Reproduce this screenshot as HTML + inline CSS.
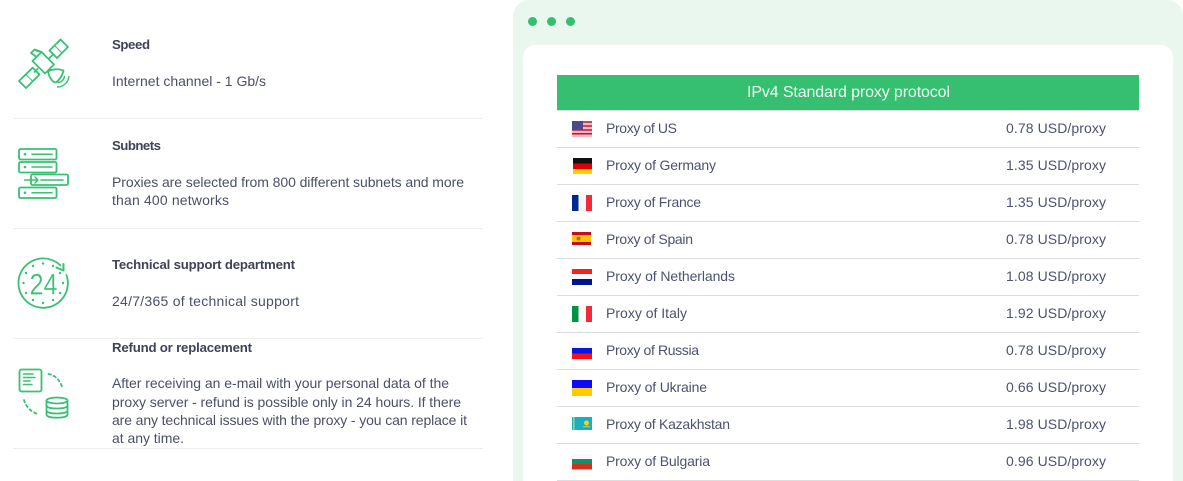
<!DOCTYPE html>
<html lang="en"><head><meta charset="utf-8"><title>Proxy</title>
<style>
html,body{margin:0;padding:0;background:#fff;width:1183px;height:481px;overflow:hidden}
body{position:relative}
.abs{position:absolute}
.panel{left:513px;top:0;width:670px;height:481px;background:#eaf7ef;border-radius:16px 16px 0 0}
.inner{left:523px;top:45px;width:650px;height:436px;background:#fff;border-radius:12px 12px 0 0}
.dot{top:16.5px;width:9px;height:9px;border-radius:50%;background:#34bf70}
.head{left:557px;top:75px;width:582px;height:35px;background:#36bf71}
.sep{background:#eeeeee;height:1px;left:13px;width:470px}
.rl{background:#dddddd;height:1px;left:557px;width:582px}
svg.o{position:absolute;left:0;top:0}
text{font-family:"Liberation Sans",sans-serif}
.t{font-size:13.2px;font-weight:bold;fill:#3f4258}
.b{font-size:14px;fill:#4b5068}
.r{font-size:14px;fill:#4c5270}
.h{font-size:16px;fill:#eafff3}
.ic{fill:none;stroke:#38c174;stroke-width:1.8;stroke-linejoin:round;stroke-linecap:round}
</style></head><body>
<div class="abs panel"></div>
<div class="abs inner"></div>
<div class="abs dot" style="left:528px"></div>
<div class="abs dot" style="left:547px"></div>
<div class="abs dot" style="left:566px"></div>
<div class="abs head"></div>
<div class="abs sep" style="top:118px"></div>
<div class="abs sep" style="top:228px"></div>
<div class="abs sep" style="top:338px"></div>
<div class="abs sep" style="top:448px"></div>
<div class="abs rl" style="top:110px"></div>
<div class="abs rl" style="top:147px"></div>
<div class="abs rl" style="top:184px"></div>
<div class="abs rl" style="top:221px"></div>
<div class="abs rl" style="top:258px"></div>
<div class="abs rl" style="top:295px"></div>
<div class="abs rl" style="top:332px"></div>
<div class="abs rl" style="top:369px"></div>
<div class="abs rl" style="top:406px"></div>
<div class="abs rl" style="top:443px"></div>
<div class="abs rl" style="top:480px"></div>

<svg class="o" width="1183" height="481" viewBox="0 0 1183 481" xmlns="http://www.w3.org/2000/svg">
<!-- satellite -->
<g class="ic">
<path d="M60.500 39.500L68 47L57 58L49.500 50.500Z"/>
<path d="M32.700 67.700L39.500 74.500L26 88L19 81Z"/>
<path d="M26 74.700L33 81.500M54.500 45.500L62 53" stroke-width="1"/>
<path d="M53 54.500L49.500 58M37.500 69L34.500 72"/>
<path d="M41.500 52L54 64.500L45 73.500L32.500 61Z"/>
<path d="M36 56.500L31 53L34.500 49.500L38 51.500M34.500 49.500L41.500 52"/>
<path d="M48 71.500C49.500 79 54 83.500 56.500 82C60 79.500 63 74 63.500 70.500C58.500 68.500 52 69 48 71.500Z"/>
<path d="M58 82.500C61 82.500 64 80 64.500 76.500M57.500 87C63 87 68.500 82.500 68.800 76.500" stroke-width="1.400"/>
</g>
<!-- subnets -->
<g class="ic">
<rect x="19" y="149" width="37.500" height="10.500" rx="1.500"/>
<rect x="19" y="162" width="37.500" height="10.500" rx="1.500"/>
<rect x="31" y="174.500" width="37" height="10.500" rx="1.500"/>
<rect x="19" y="187.500" width="37.500" height="10.500" rx="1.500"/>
<path d="M32 154.200H52M32 167H52M41 180H63M32 192.700H52M24.500 180H38M35 177L38 180L35 183" stroke-width="1.500"/>
</g>
<g fill="#38c174"><circle cx="25" cy="154.200" r="1.300"/><circle cx="25" cy="167" r="1.300"/><circle cx="25" cy="192.700" r="1.300"/></g>
<!-- 24 -->
<g class="ic">
<path d="M60.500 265.500A24.700 24.700 0 1 0 66.500 275"/>
<path d="M56.500 267.500L63.500 270.500L63.500 264" stroke-width="2"/>
</g>
<g fill="#38c174">
<circle cx="43" cy="263.500" r="1.200"/><circle cx="33" cy="266" r="1.200"/><circle cx="53" cy="266" r="1.200"/>
<circle cx="26" cy="273" r="1.200"/><circle cx="60" cy="273" r="1.200"/><circle cx="23.500" cy="283" r="1.200"/><circle cx="63" cy="283" r="1.200"/>
<circle cx="26" cy="293" r="1.200"/><circle cx="60" cy="293" r="1.200"/><circle cx="33" cy="300" r="1.200"/><circle cx="53" cy="300" r="1.200"/><circle cx="43" cy="303" r="1.200"/>
</g>
<text x="29.500" y="294.500" font-size="30" fill="#38c174" stroke="#ffffff" stroke-width="0.250" textLength="28" lengthAdjust="spacingAndGlyphs">24</text>
<!-- refund -->
<g class="ic">
<rect x="19.500" y="369.500" width="22" height="22" rx="2"/>
<path d="M23.500 374H33M23.500 377.500H35M23.500 381H30M23.500 384.500H32" stroke-width="1.500"/>
<path d="M48.500 374C55 375 60 380 62.500 388" stroke-dasharray="2.500 3"/>
<path d="M24 400C26 407 31 412 39 414.500" stroke-dasharray="2.500 3"/>
<ellipse cx="57" cy="400.500" rx="10.500" ry="3"/>
<path d="M46.500 400.500V414.500C46.500 416.500 51 417.700 57 417.700S67.500 416.500 67.500 414.500V400.500M46.500 405.500C46.500 407.500 51 408.500 57 408.500S67.500 407.500 67.500 405.500M46.500 410.500C46.500 412.500 51 413.500 57 413.500S67.500 412.500 67.500 410.500"/>
</g>

<!-- left text -->
<text class="t" x="112" y="49" textLength="38">Speed</text>
<text class="b" x="112" y="86" textLength="154">Internet channel - 1 Gb/s</text>
<text class="t" x="112" y="150" textLength="49">Subnets</text>
<text class="b" x="112" y="187" textLength="352">Proxies are selected from 800 different subnets and more</text>
<text class="b" x="112" y="205" textLength="117">than 400 networks</text>
<text class="t" x="112" y="269" textLength="183">Technical support department</text>
<text class="b" x="112" y="306" textLength="187">24/7/365 of technical support</text>
<text class="t" x="112" y="352" textLength="140">Refund or replacement</text>
<text class="b" x="112" y="388" textLength="337">After receiving an e-mail with your personal data of the</text>
<text class="b" x="112" y="407" textLength="349">proxy server - refund is possible only in 24 hours. If there</text>
<text class="b" x="112" y="425" textLength="355">are any technical issues with the proxy - you can replace it</text>
<text class="b" x="112" y="443" textLength="72">at any time.</text>

<!-- table text -->
<text class="h" x="747" y="97" textLength="203">IPv4 Standard proxy protocol</text>
<text class="r" x="606" y="133" textLength="71">Proxy of US</text>
<text class="r" x="606" y="170" textLength="110">Proxy of Germany</text>
<text class="r" x="606" y="207" textLength="95">Proxy of France</text>
<text class="r" x="606" y="244" textLength="87">Proxy of Spain</text>
<text class="r" x="606" y="281" textLength="129">Proxy of Netherlands</text>
<text class="r" x="606" y="318" textLength="81">Proxy of Italy</text>
<text class="r" x="606" y="355" textLength="93">Proxy of Russia</text>
<text class="r" x="606" y="392" textLength="101">Proxy of Ukraine</text>
<text class="r" x="606" y="429" textLength="124">Proxy of Kazakhstan</text>
<text class="r" x="606" y="466" textLength="104">Proxy of Bulgaria</text>
<text class="r" x="1006" y="133" textLength="100">0.78 USD/proxy</text>
<text class="r" x="1006" y="170" textLength="100">1.35 USD/proxy</text>
<text class="r" x="1006" y="207" textLength="100">1.35 USD/proxy</text>
<text class="r" x="1006" y="244" textLength="100">0.78 USD/proxy</text>
<text class="r" x="1006" y="281" textLength="100">1.08 USD/proxy</text>
<text class="r" x="1006" y="318" textLength="100">1.92 USD/proxy</text>
<text class="r" x="1006" y="355" textLength="100">0.78 USD/proxy</text>
<text class="r" x="1006" y="392" textLength="100">0.66 USD/proxy</text>
<text class="r" x="1006" y="429" textLength="100">1.98 USD/proxy</text>
<text class="r" x="1006" y="466" textLength="100">0.96 USD/proxy</text>

<!-- flags -->
<!-- US -->
<g>
<rect x="572" y="121" width="20" height="16" fill="#f3b9c2"/>
<rect x="572" y="121" width="20" height="2" fill="#c9475c"/>
<rect x="572" y="125" width="20" height="2" fill="#c9475c"/>
<rect x="572" y="129" width="20" height="2" fill="#c9475c"/>
<rect x="572" y="133" width="20" height="1.500" fill="#c01030"/>
<rect x="572" y="121" width="11" height="9" fill="#4a4a8c"/>
</g>
<!-- Germany -->
<rect x="573" y="158" width="19" height="5.500" fill="#111"/>
<rect x="573" y="163.500" width="19" height="5.500" fill="#e00000"/>
<rect x="573" y="169" width="19" height="5" fill="#ffce00"/>
<!-- France -->
<rect x="572" y="195" width="6.500" height="16" fill="#00268f"/>
<rect x="578.500" y="195" width="7" height="16" fill="#f6f6ff"/>
<rect x="586" y="195" width="6" height="16" fill="#ef2b3a"/>
<!-- Spain -->
<rect x="572" y="232" width="19" height="13" fill="#c60b1e"/>
<rect x="572" y="235" width="19" height="7" fill="#ffc400"/>
<circle cx="578.500" cy="238.500" r="2" fill="#ad6a1e"/>
<!-- Netherlands -->
<rect x="572" y="269" width="20" height="5" fill="#f4231f"/>
<rect x="572" y="274" width="20" height="5" fill="#f6f6ff"/>
<rect x="572" y="279" width="20" height="6" fill="#00148f"/>
<!-- Italy -->
<rect x="572" y="306" width="6.500" height="16" fill="#009246"/>
<rect x="578.500" y="306" width="7" height="16" fill="#fbfbfb"/>
<rect x="586" y="306" width="6" height="16" fill="#ef2b3a"/>
<!-- Russia -->
<rect x="572" y="343" width="20" height="5" fill="#f8f8ff"/>
<rect x="572" y="348" width="20" height="5.500" fill="#0a14e0"/>
<rect x="572" y="353.500" width="20" height="5.500" fill="#fb0f14"/>
<!-- Ukraine -->
<rect x="572" y="380" width="20" height="8" fill="#0b0cf5"/>
<rect x="572" y="388" width="20" height="8" fill="#ffcb00"/>
<!-- Kazakhstan -->
<rect x="572" y="417" width="20" height="13" fill="#14b0c8"/>
<rect x="573" y="417" width="1.500" height="13" fill="#d8c23c"/>
<circle cx="586.500" cy="423" r="2.500" fill="#f4cf1e"/>
<rect x="583" y="426" width="7" height="1.200" fill="#b8c458"/>
<!-- Bulgaria -->
<rect x="572" y="454" width="20" height="5" fill="#f8f8f8"/>
<rect x="572" y="459" width="20" height="5" fill="#12906a"/>
<rect x="572" y="464" width="20" height="5.500" fill="#d6301c"/>
</svg>
</body></html>
